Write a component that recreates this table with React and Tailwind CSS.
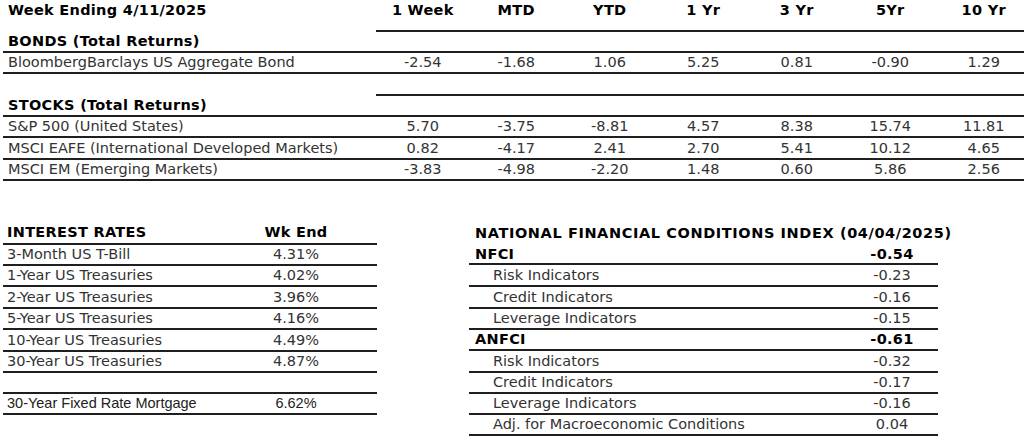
import React from 'react';

const line = 'border-b-2 border-[#1f1f1f]';
const boldText = 'font-bold text-black tracking-[0.3px]';

const cols = ['1 Week', 'MTD', 'YTD', '1 Yr', '3 Yr', '5Yr', '10 Yr'];

const bonds = [
  { name: 'BloombergBarclays US Aggregate Bond', v: ['-2.54', '-1.68', '1.06', '5.25', '0.81', '-0.90', '1.29'], h: 'h-[21px]' },
];

const stocks = [
  { name: 'S&P 500 (United States)', v: ['5.70', '-3.75', '-8.81', '4.57', '8.38', '15.74', '11.81'], h: 'h-[21px]' },
  { name: 'MSCI EAFE (International Developed Markets)', v: ['0.82', '-4.17', '2.41', '2.70', '5.41', '10.12', '4.65'], h: 'h-[22px]' },
  { name: 'MSCI EM (Emerging Markets)', v: ['-3.83', '-4.98', '-2.20', '1.48', '0.60', '5.86', '2.56'], h: 'h-[21px]' },
];

const rates = [
  { name: '3-Month US T-Bill', v: '4.31%', h: 'h-[21px]' },
  { name: '1-Year US Treasuries', v: '4.02%', h: 'h-[21px]' },
  { name: '2-Year US Treasuries', v: '3.96%', h: 'h-[22px]' },
  { name: '5-Year US Treasuries', v: '4.16%', h: 'h-[21px]' },
  { name: '10-Year US Treasuries', v: '4.49%', h: 'h-[22px]' },
  { name: '30-Year US Treasuries', v: '4.87%', h: 'h-[21px]' },
];

const nfci = [
  { name: 'NFCI', v: '-0.54', bold: true, h: 'h-[20px]' },
  { name: 'Risk Indicators', v: '-0.23', h: 'h-[22px]' },
  { name: 'Credit Indicators', v: '-0.16', h: 'h-[22px]' },
  { name: 'Leverage Indicators', v: '-0.15', h: 'h-[21px]' },
  { name: 'ANFCI', v: '-0.61', bold: true, h: 'h-[21px]' },
  { name: 'Risk Indicators', v: '-0.32', h: 'h-[22px]' },
  { name: 'Credit Indicators', v: '-0.17', h: 'h-[21px]' },
  { name: 'Leverage Indicators', v: '-0.16', h: 'h-[21px]' },
  { name: 'Adj. for Macroeconomic Conditions', v: '0.04', h: 'h-[21px]' },
];

// one row of the returns table
function ReturnRow({ name, v, h, bold, labelLine = true, valueLine = true, top }) {
  const align = top ? 'items-start pt-[2px]' : 'items-center';
  return (
    <div className={`grid grid-cols-[373px_repeat(7,93.5px)] ${h}`}>
      <div className={`flex ${align} pl-[5px] whitespace-nowrap ${labelLine ? line : ''} ${bold ? boldText : ''}`}>
        {name}
      </div>
      {(v || Array(7).fill('')).map((x, i) => (
        <div key={i} className={`flex ${align} justify-center whitespace-nowrap ${valueLine ? line : ''} ${top ? boldText : ''}`}>
          {x}
        </div>
      ))}
    </div>
  );
}

export default function App() {
  return (
    <div className="w-[1024px] h-[448px] overflow-hidden bg-white text-[14.5px] leading-[17px] text-[#333] font-['DejaVu_Sans',Verdana,sans-serif]">
      {/* returns table */}
      <div className="ml-[3px] w-[1030px]">
        <ReturnRow name="Week Ending 4/11/2025" v={cols} h="h-[32px]" bold top labelLine={false} />
        <ReturnRow name="BONDS (Total Returns)" h="h-[21px]" bold />
        {bonds.map((r) => (
          <ReturnRow key={r.name} {...r} />
        ))}
        <ReturnRow name="" h="h-[22px]" labelLine={false} />
        <ReturnRow name="STOCKS (Total Returns)" h="h-[21px]" bold />
        {stocks.map((r) => (
          <ReturnRow key={r.name} {...r} />
        ))}
      </div>

      <div className="flex mt-[41px]">
        {/* interest rates */}
        <div className="ml-[3px] w-[374px] shrink-0">
          <div className={`grid grid-cols-[233px_120px_21px] h-[23px] items-center ${boldText} ${line}`}>
            <div className="pl-[4px]">INTEREST RATES</div>
            <div className="text-center">Wk End</div>
            <div />
          </div>
          {rates.map((r) => (
            <div key={r.name} className={`grid grid-cols-[233px_120px_21px] items-center ${r.h} ${line}`}>
              <div className="pl-[4px] whitespace-nowrap">{r.name}</div>
              <div className="text-center">{r.v}</div>
              <div />
            </div>
          ))}
          <div className={`h-[21px] ${line}`} />
          <div className={`grid grid-cols-[233px_120px_21px] items-center h-[21px] text-[14.5px] text-[#222] font-['Liberation_Sans',Arial,sans-serif] ${line}`}>
            <div className="pl-[4px] whitespace-nowrap">30-Year Fixed Rate Mortgage</div>
            <div className="text-center">6.62%</div>
            <div />
          </div>
        </div>

        {/* financial conditions */}
        <div className="ml-[92px] w-[469px] shrink-0">
          <div className="h-[23px] flex items-center pl-[6px] font-bold text-black tracking-[0.6px] whitespace-nowrap">
            NATIONAL FINANCIAL CONDITIONS INDEX (04/04/2025)
          </div>
          {nfci.map((r, i) => (
            <div key={i} className={`grid grid-cols-[383px_80px_6px] items-center ${r.h} ${line} ${r.bold ? boldText : ''}`}>
              <div className={`${r.bold ? 'pl-[6px]' : 'pl-[24px]'} whitespace-nowrap`}>{r.name}</div>
              <div className="text-center">{r.v}</div>
              <div />
            </div>
          ))}
        </div>
      </div>
    </div>
  );
}
